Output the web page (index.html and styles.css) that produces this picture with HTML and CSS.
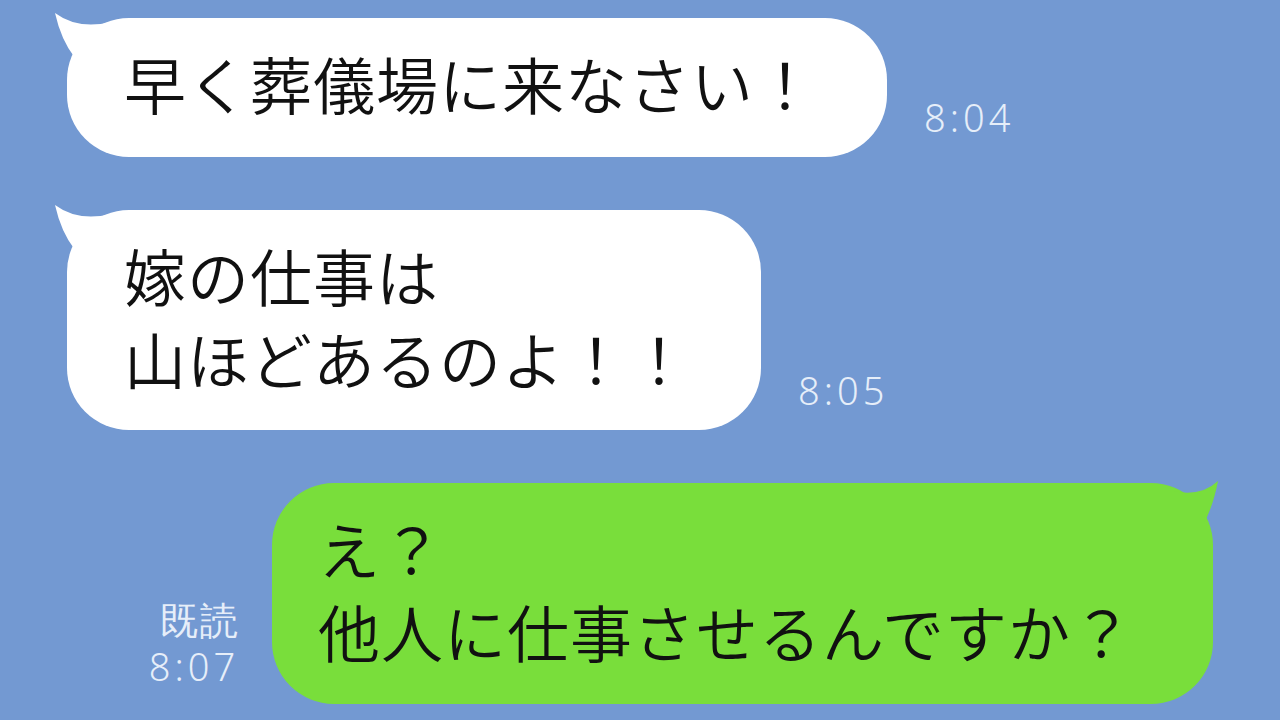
FILE: index.html
```html
<!DOCTYPE html>
<html lang="ja">
<head>
  <meta charset="UTF-8">
  <meta name="viewport" content="width=device-width, initial-scale=1.0">
  <title>トーク</title>
  <link rel="stylesheet" href="styles.css">
</head>
<body>
  <div class="chat">
    <div class="row row-in first">
      <div class="bubble bubble-in">
        <svg class="tail tail-in" width="60" height="50" viewBox="0 0 60 50"><path d="M2,3 Q8,30 22,48 L58,48 L58,12 Q25,20 2,3 Z"/></svg>
        <p>早く葬儀場に来なさい！</p>
      </div>
      <div class="meta">
        <span>8:04</span>
      </div>
    </div>

    <div class="row row-in">
      <div class="bubble bubble-in">
        <svg class="tail tail-in" width="60" height="50" viewBox="0 0 60 50"><path d="M2,3 Q8,30 22,48 L58,48 L58,12 Q25,20 2,3 Z"/></svg>
        <p>嫁の仕事は<br>山ほどあるのよ！！</p>
      </div>
      <div class="meta">
        <span>8:05</span>
      </div>
    </div>

    <div class="row row-out">
      <div class="meta meta-out">
        <span>既読</span>
        <span>8:07</span>
      </div>
      <div class="bubble bubble-out">
        <svg class="tail tail-out" width="50" height="50" viewBox="0 0 50 50"><path d="M45,4 Q40,30 30,48 L0,48 L0,14 Q28,20 45,4 Z"/></svg>
        <p>え？<br>他人に仕事させるんですか？</p>
      </div>
    </div>
  </div>
</body>
</html>
```

FILE: styles.css
```css
/* chat screen */
body {
  margin: 0;
  background-color: #7399d2;
  font-family: "Noto Sans CJK JP", "Noto Sans", sans-serif;
  overflow: hidden;
}

.chat {
  display: flex;
  flex-direction: column;
  gap: 53px;
  padding: 18px 67px 0;
}

.row {
  display: flex;
  align-items: flex-end;
  gap: 37px;
}

.row-out {
  justify-content: flex-end;
}

.bubble {
  position: relative;
  border-radius: 62px;
  padding: 24px 70px 32px 57px;
}

.bubble p {
  margin: 0;
  font-size: 62px;
  font-weight: 350;
  line-height: 83px;
  letter-spacing: 1px;
  color: #111;
  white-space: nowrap;
}

.bubble-in {
  background-color: #fff;
}

.bubble-in + .meta {
  margin-bottom: 16px;
}

.row-in + .row-in .bubble {
  padding-bottom: 30px;
}

.bubble-out {
  background-color: #79de3b;
  padding: 24px 79px 31px 46px;
}

.tail {
  position: absolute;
  top: -8px;
}

.tail-in {
  left: -14px;
  fill: #fff;
}

.tail-out {
  right: -10px;
  top: -6px;
  fill: #79de3b;
}

.meta {
  display: flex;
  flex-direction: column;
  align-items: flex-end;
  margin-bottom: 14px;
  font-family: "Noto Sans", sans-serif;
  font-size: 38px;
  font-weight: 300;
  line-height: 47px;
  letter-spacing: 4px;
  color: #e6eef9;
}

.meta-out {
  margin-right: -4px;
}

.meta-out span:first-child {
  letter-spacing: 2px;
  margin-right: -1px;
}
```
